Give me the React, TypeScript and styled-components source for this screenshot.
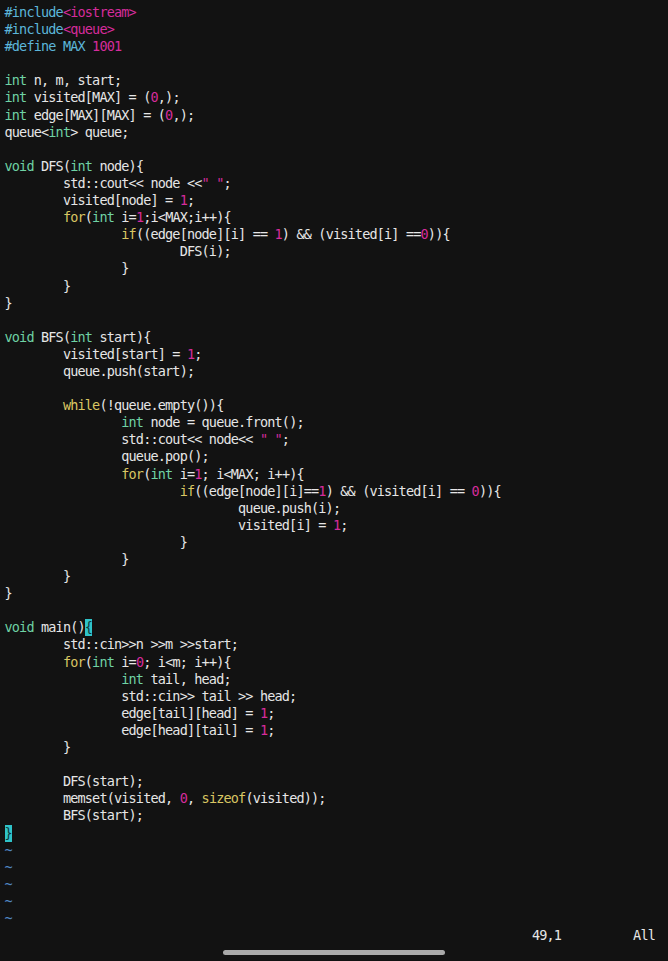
import React from "react";
import styled, { createGlobalStyle } from "styled-components";

const Global = createGlobalStyle`
  html, body {
    margin: 0;
    padding: 0;
    background: #121212;
  }
  #root {
    min-height: 100vh;
  }
`;

type Kind = "t" | "pre" | "str" | "num" | "type" | "kw" | "match" | "cursor";
type Tok = [Kind, string];

const T = (s: string): Tok => ["t", s];
const P = (s: string): Tok => ["pre", s];
const S = (s: string): Tok => ["str", s];
const N = (s: string): Tok => ["num", s];
const Y = (s: string): Tok => ["type", s];
const K = (s: string): Tok => ["kw", s];

const code: Tok[][] = [
  [P("#include"), S("<iostream>")],
  [P("#include"), S("<queue>")],
  [P("#define MAX "), N("1001")],
  [],
  [Y("int"), T(" n, m, start;")],
  [Y("int"), T(" visited[MAX] = ("), N("0"), T(",);")],
  [Y("int"), T(" edge[MAX][MAX] = ("), N("0"), T(",);")],
  [T("queue<"), Y("int"), T("> queue;")],
  [],
  [Y("void"), T(" DFS("), Y("int"), T(" node){")],
  [T("\tstd::cout<< node <<"), S('" "'), T(";")],
  [T("\tvisited[node] = "), N("1"), T(";")],
  [T("\t"), K("for"), T("("), Y("int"), T(" i="), N("1"), T(";i<MAX;i++){")],
  [T("\t\t"), K("if"), T("((edge[node][i] == "), N("1"), T(") && (visited[i] =="), N("0"), T(")){")],
  [T("\t\t\tDFS(i);")],
  [T("\t\t}")],
  [T("\t}")],
  [T("}")],
  [],
  [Y("void"), T(" BFS("), Y("int"), T(" start){")],
  [T("\tvisited[start] = "), N("1"), T(";")],
  [T("\tqueue.push(start);")],
  [],
  [T("\t"), K("while"), T("(!queue.empty()){")],
  [T("\t\t"), Y("int"), T(" node = queue.front();")],
  [T("\t\tstd::cout<< node<< "), S('" "'), T(";")],
  [T("\t\tqueue.pop();")],
  [T("\t\t"), K("for"), T("("), Y("int"), T(" i="), N("1"), T("; i<MAX; i++){")],
  [T("\t\t\t"), K("if"), T("((edge[node][i]=="), N("1"), T(") && (visited[i] == "), N("0"), T(")){")],
  [T("\t\t\t\tqueue.push(i);")],
  [T("\t\t\t\tvisited[i] = "), N("1"), T(";")],
  [T("\t\t\t}")],
  [T("\t\t}")],
  [T("\t}")],
  [T("}")],
  [],
  [Y("void"), T(" main()"), ["match", "{"]],
  [T("\tstd::cin>>n >>m >>start;")],
  [T("\t"), K("for"), T("("), Y("int"), T(" i="), N("0"), T("; i<m; i++){")],
  [T("\t\t"), Y("int"), T(" tail, head;")],
  [T("\t\tstd::cin>> tail >> head;")],
  [T("\t\tedge[tail][head] = "), N("1"), T(";")],
  [T("\t\tedge[head][tail] = "), N("1"), T(";")],
  [T("\t}")],
  [],
  [T("\tDFS(start);")],
  [T("\tmemset(visited, "), N("0"), T(", "), K("sizeof"), T("(visited));")],
  [T("\tBFS(start);")],
  [["cursor", "}"]],
];

const colors: Record<Kind, string> = {
  t: "#e6e6e6",
  pre: "#5cb6da",
  str: "#d62c9c",
  num: "#d62c9c",
  type: "#6fd3a4",
  kw: "#d9c663",
  match: "#0f3a3c",
  cursor: "#0f3a3c",
};

const Screen = styled.div`
  position: relative;
  box-sizing: border-box;
  width: 668px;
  height: 961px;
  overflow: hidden;
  background: #121212;
  padding: 4px 0 0 4.5px;
  font-family: "DejaVu Sans Mono", "Liberation Mono", monospace;
  font-size: 13.5px;
  letter-spacing: -0.83px;
  color: #e6e6e6;
`;

const Buffer = styled.div`
  display: flex;
  flex-direction: column;
`;

const Line = styled.div`
  height: 17.1px;
  line-height: 17.1px;
  white-space: pre;
  tab-size: 8;
  -moz-tab-size: 8;
`;

const Tok = styled.span<{ $kind: Kind }>`
  color: ${(p) => colors[p.$kind]};
  ${(p) =>
    p.$kind === "match" || p.$kind === "cursor"
      ? `background: #2fc3c9; display: inline-block; height: 17.1px;`
      : ""}
`;

const Tilde = styled(Line)`
  color: #4f86c0;
`;

const CommandLine = styled.div`
  display: flex;
  justify-content: flex-end;
  gap: 72px;
  padding-right: 13px;
  height: 17.1px;
  line-height: 17.1px;
  white-space: pre;
  color: #e6e6e6;
`;

const HomeIndicator = styled.div`
  position: absolute;
  left: 223px;
  bottom: 6px;
  width: 222px;
  height: 5px;
  border-radius: 3px;
  background: #a9a9a9;
`;

export default function App() {
  return (
    <>
      <Global />
      <Screen>
        <Buffer>
          {code.map((line, i) => (
            <Line key={i}>
              {line.length === 0
                ? " "
                : line.map(([k, s], j) => (
                    <Tok key={j} $kind={k}>
                      {s}
                    </Tok>
                  ))}
            </Line>
          ))}
          {Array.from({ length: 5 }).map((_, i) => (
            <Tilde key={"t" + i}>~</Tilde>
          ))}
          <CommandLine>
            <span>49,1</span>
            <span>All</span>
          </CommandLine>
        </Buffer>
        <HomeIndicator />
      </Screen>
    </>
  );
}
